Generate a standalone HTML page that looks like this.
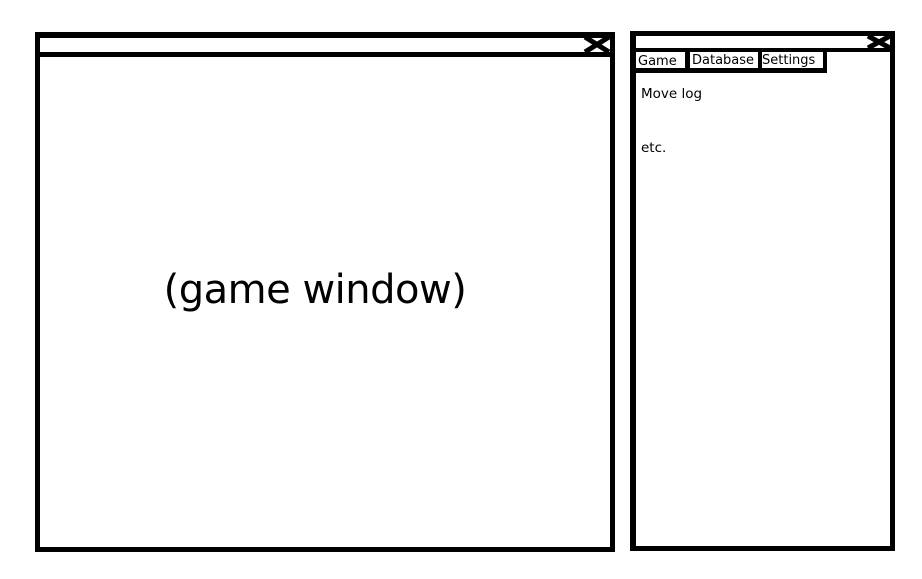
<!DOCTYPE html>
<html><head><style>
body{margin:0;width:922px;height:579px;background:#fff;position:relative;overflow:hidden;font-family:"Liberation Sans",sans-serif}
.b{position:absolute;background:#000}
.t{position:absolute;font-size:13.5px;color:#000;font-family:"DejaVu Sans","Liberation Sans",sans-serif}
</style></head><body>
<div class="b" style="left:35px;top:32px;width:580px;height:6px"></div>
<div class="b" style="left:35px;top:52px;width:580px;height:5px"></div>
<div class="b" style="left:35px;top:547px;width:580px;height:5px"></div>
<div class="b" style="left:35px;top:32px;width:5px;height:520px"></div>
<div class="b" style="left:610px;top:32px;width:5px;height:520px"></div>
<svg style="position:absolute;left:583px;top:36px" width="28" height="17"><path d="M2 1 L26 16 M2 16 L26 1" stroke="#000" stroke-width="5"/></svg>
<div style="position:absolute;left:30px;top:267px;width:570px;text-align:center;font-size:40px;font-family:'DejaVu Sans','Liberation Sans',sans-serif;letter-spacing:-0.5px">(game window)</div>
<div class="b" style="left:630px;top:31px;width:265px;height:5px"></div>
<div class="b" style="left:630px;top:48px;width:265px;height:4px"></div>
<div class="b" style="left:630px;top:546px;width:265px;height:5px"></div>
<div class="b" style="left:630px;top:31px;width:6px;height:520px"></div>
<div class="b" style="left:890px;top:31px;width:5px;height:520px"></div>
<svg style="position:absolute;left:866px;top:35px" width="26" height="14"><path d="M2 1 L24 13 M2 13 L24 1" stroke="#000" stroke-width="5"/></svg>
<div class="b" style="left:634px;top:68px;width:193px;height:5px"></div>
<div class="b" style="left:685px;top:52px;width:5px;height:20px"></div>
<div class="b" style="left:758px;top:52px;width:4px;height:20px"></div>
<div class="b" style="left:823px;top:52px;width:4px;height:20px"></div>
<div class="t" style="left:638px;top:54px;font-size:13px">Game</div>
<div class="t" style="left:692px;top:53px;font-size:13px">Database</div>
<div class="t" style="left:762px;top:53px;font-size:13px">Settings</div>
<div class="t" style="left:641px;top:86px">Move log</div>
<div class="t" style="left:641px;top:140px">etc.</div>
</body></html>
